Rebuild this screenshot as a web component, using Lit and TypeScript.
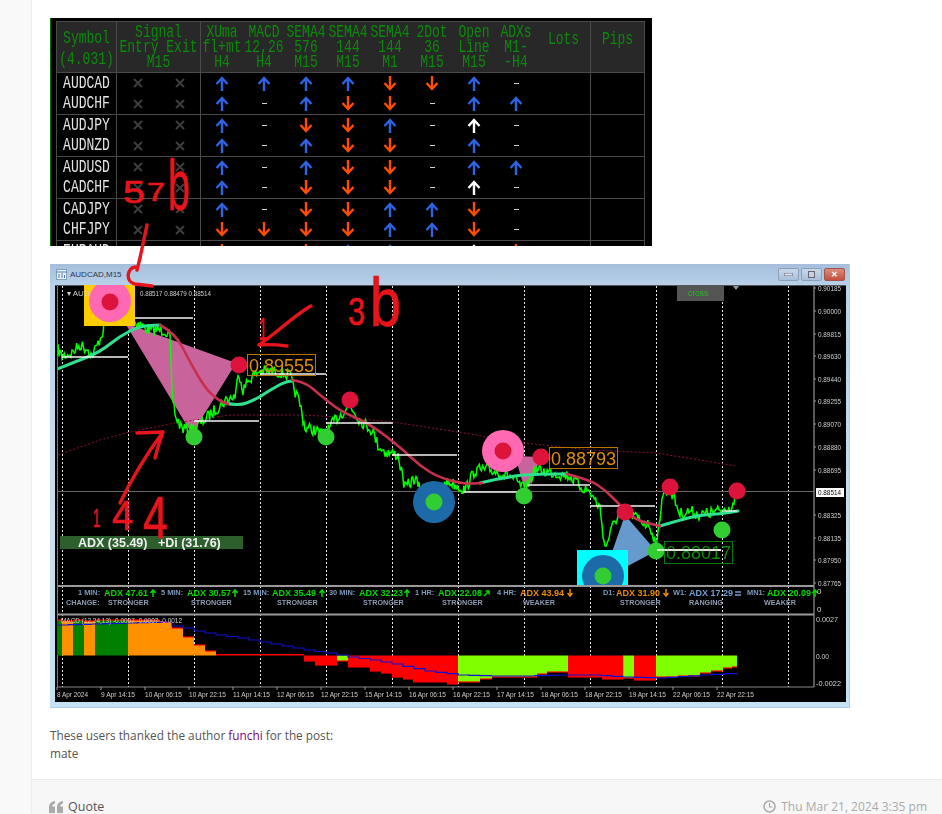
import { LitElement, html, svg, css } from "lit";
import { customElement } from "lit/decorators.js";

// ---- quote table data: u = blue up, d = orange down, w = white up, - = none
const ROWS: [string, string][] = [
  ["AUDCAD", "uuuuddu-"],
  ["AUDCHF", "u-udd-uu"],
  ["AUDJPY", "u-ddu-w-"],
  ["AUDNZD", "u-udd-u-"],
  ["AUDUSD", "u-udd-uu"],
  ["CADCHF", "u-ddd-w-"],
  ["CADJPY", "u-dduud-"],
  ["CHFJPY", "dddduud-"],
  ["EURAUD", "d-duu-wd"],
];

const HEADS = [
  ["XUma", "fl+mt", "H4"],
  ["MACD", "12,26", "H4"],
  ["SEMA4", "576", "M15"],
  ["SEMA4", "144", "M15"],
  ["SEMA4", "144", "M1"],
  ["2Dot", "36", "M15"],
  ["Open", "Line", "M15"],
  ["ADXs", "M1-", "-H4"],
];

@customElement("quote-table")
class QuoteTable extends LitElement {
  static styles = css`
    :host {
      display: block;
      width: 602px;
      height: 228px;
      box-sizing: border-box;
      background: #000;
      border-left: 1px solid #0a6b0a;
      padding: 3px 0 0 5px;
      overflow: hidden;
    }
    .grid {
      width: 589px;
      box-sizing: border-box;
      border-left: 1px solid #4a4a4a;
      border-top: 1px solid #4a4a4a;
    }
    .head,
    .row {
      display: grid;
      grid-template-columns: 60px repeat(10, 42px) 54px 54px;
    }
    .head {
      height: 50px;
      background: #282828;
      border-bottom: 1px solid #4a4a4a;
      color: #0a8a0a;
    }
    .row {
      color: #e4e4e4;
    }
    .group {
      border-bottom: 1px solid #4a4a4a;
    }
    .group .row {
      height: 20.5px;
    }
    .cell {
      display: flex;
      flex-direction: column;
      align-items: center;
      justify-content: center;
      box-sizing: border-box;
      font: 13px/15px "Liberation Mono", monospace;
    }
    .end {
      border-right: 1px solid #4a4a4a;
    }
    .span2 {
      grid-column: span 2;
    }
    .spread {
      gap: 6px;
      padding-top: 3px;
    }
    .lift {
      padding-bottom: 16px;
    }
    .t {
      display: block;
      white-space: pre;
      transform: scaleY(1.38);
    }
    .mark {
      display: block;
    }
    .dash {
      width: 5px;
      height: 1px;
      background: #d0d0d0;
    }
  `;

  mark(c: string) {
    if (c === "-") return html`<div class="dash"></div>`;
    const up = c !== "d";
    const col = c === "u" ? "#2f63e4" : c === "w" ? "#fff" : "#ff4d00";
    return html`<svg class="mark" width="14" height="15" viewBox="0 0 14 15">
      <path
        d=${up ? "M7 15V2M1.5 8L7 2l5.5 6" : "M7 0v13M1.5 7L7 13l5.5-6"}
        fill="none"
        stroke=${col}
        stroke-width="2.4"
      />
    </svg>`;
  }

  cross() {
    return html`<svg class="mark" width="10" height="10" viewBox="0 0 10 10">
      <path d="M1 1l8 8M9 1l-8 8" stroke="#3d3d3d" stroke-width="2" />
    </svg>`;
  }

  row(r: [string, string]) {
    return html`<div class="row">
      <div class="cell end"><span class="t">${r[0]}</span></div>
      <div class="cell">${this.cross()}</div>
      <div class="cell end">${this.cross()}</div>
      ${[...r[1]].map((c) => html`<div class="cell">${this.mark(c)}</div>`)}
      <div class="cell end"></div>
      <div class="cell end"></div>
    </div>`;
  }

  render() {
    const groups = [];
    for (let i = 0; i < ROWS.length; i += 2) groups.push(ROWS.slice(i, i + 2));
    return html`<div class="grid">
      <div class="head">
        <div class="cell end spread">
          <span class="t">Symbol</span><span class="t">(4.031)</span>
        </div>
        <div class="cell end span2">
          <span class="t">Signal</span><span class="t">Entry Exit</span><span class="t">M15</span>
        </div>
        ${HEADS.map(
          (h) => html`<div class="cell">${h.map((l) => html`<span class="t">${l}</span>`)}</div>`
        )}
        <div class="cell end lift"><span class="t">Lots</span></div>
        <div class="cell end lift"><span class="t">Pips</span></div>
      </div>
      ${groups.map((g) => html`<div class="group">${g.map((r) => this.row(r))}</div>`)}
    </div>`;
  }
}

// ---- chart data, all in page coordinates
type P = [number, number];

const PRICE: P[] = [
  [58, 350], [62, 356], [72, 353], [80, 345], [88, 349], [92, 356], [97, 346], [105, 326], [112, 310],
  [128, 315], [135, 322], [150, 330], [165, 330], [170, 338], [172, 395], [176, 418], [182, 428],
  [190, 430], [200, 424], [215, 410], [226, 400], [235, 396], [239, 372], [243, 390], [250, 378],
  [260, 371], [280, 372], [290, 376], [293, 386], [300, 404], [305, 428], [315, 430], [325, 436],
  [335, 420], [345, 410], [350, 405], [360, 420], [372, 430], [378, 445], [385, 452], [398, 455],
  [405, 488], [415, 478], [420, 490], [435, 490], [450, 482], [465, 490], [475, 470], [490, 470],
  [510, 476], [525, 490], [535, 470], [555, 473], [570, 476], [580, 486], [590, 492], [600, 508],
  [605, 548], [615, 520], [625, 510], [640, 520], [650, 526], [657, 546], [662, 496], [670, 488],
  [680, 514], [690, 511], [700, 515], [720, 511], [732, 506], [737, 497],
];

function noisy(pts: P[]) {
  let seed = 7;
  const rnd = () => {
    seed = (seed * 16807) % 2147483647;
    return seed / 2147483647 - 0.5;
  };
  const out: string[] = [];
  for (let i = 0; i < pts.length - 1; i++) {
    const [x0, y0] = pts[i];
    const [x1, y1] = pts[i + 1];
    const n = Math.max(1, Math.round((x1 - x0) / 1.1));
    for (let k = 0; k < n; k++) {
      const f = k / n;
      out.push(`${(x0 + (x1 - x0) * f).toFixed(1)},${(y0 + (y1 - y0) * f + rnd() * 12).toFixed(1)}`);
    }
  }
  return out.join(" ");
}
const PRICE_PATH = noisy(PRICE);

const line = (p: P[]) => p.map((q) => q.join(",")).join(" ");

// curve through the midpoints, so the moving average has no corners
function smooth(p: P[]) {
  let d = `M${p[0][0]} ${p[0][1]}`;
  for (let i = 1; i < p.length - 1; i++) {
    const mx = (p[i][0] + p[i + 1][0]) / 2;
    const my = (p[i][1] + p[i + 1][1]) / 2;
    d += `Q${p[i][0]} ${p[i][1]} ${mx} ${my}`;
  }
  const e = p[p.length - 1];
  return d + `L${e[0]} ${e[1]}`;
}

const MA_TEAL: P[][] = [
  [[55, 370], [75, 362], [100, 352], [120, 336], [140, 326], [160, 325]],
  [[225, 403], [238, 406], [255, 400], [270, 390], [285, 382], [292, 381]],
  [[480, 483], [510, 476], [540, 474], [567, 474]],
  [[660, 526], [680, 520], [700, 515], [720, 514], [738, 511]],
];
const MA_RED: P[][] = [
  [[160, 325], [175, 333], [190, 362], [205, 388], [218, 400], [228, 404]],
  [[292, 380], [305, 382], [320, 395], [340, 411], [370, 424], [400, 447], [420, 466], [440, 478], [465, 484], [482, 483]],
  [[567, 474], [590, 480], [605, 490], [620, 505], [635, 520], [660, 526]],
];
const DOTTED: P[] = [
  [58, 455], [100, 440], [130, 432], [175, 423], [230, 415], [300, 415], [340, 417], [392, 422],
  [458, 432], [524, 443], [590, 450], [656, 453], [700, 460], [735, 466],
];
const LEVELS: [number, number, number][] = [
  [128, 193, 318], [62, 128, 357], [260, 326, 374], [194, 259, 421], [326, 392, 423],
  [392, 457, 455], [463, 523, 492], [527, 590, 485], [590, 655, 506], [657, 721, 550], [722, 737, 511],
];
const GRID_X = Array.from({ length: 12 }, (_, i) => 62 + i * 66);
const PRICES: [string, number][] = [
  ["0.90185", 288], ["0.90000", 311], ["0.89815", 334], ["0.89630", 356], ["0.89440", 379],
  ["0.89255", 401], ["0.89070", 424], ["0.88880", 447], ["0.88695", 470], ["0.88325", 515],
  ["0.88135", 538], ["0.87950", 560], ["0.87765", 583],
];
const DATES = [
  "8 Apr 2024", "9 Apr 14:15", "10 Apr 06:15", "10 Apr 22:15", "11 Apr 14:15", "12 Apr 06:15",
  "12 Apr 22:15", "15 Apr 14:15", "16 Apr 06:15", "16 Apr 22:15", "17 Apr 14:15", "18 Apr 06:15",
  "18 Apr 22:15", "19 Apr 14:15", "22 Apr 06:15", "22 Apr 22:15",
];

const G = "#008000";
const O = "#ff9000";
const R = "#ff0000";
const L = "#80ff00";
const ZERO = 655.5;
// histogram: x0, x1, far y, colour
const BARS: [number, number, number, string][] = [
  [57, 62, 620, G], [62, 73, 621, O], [73, 84, 620, G], [84, 95, 621, O], [95, 128, 620, G],
  [128, 160, 620, O], [160, 172, 622, O], [172, 183, 628, O], [183, 194, 637, O], [194, 205, 645, O],
  [205, 216, 651, O], [216, 304, 654.5, R], [304, 315, 661, R], [315, 337, 665, R], [337, 348, 661, L],
  [348, 370, 667, R], [370, 381, 671, R], [381, 392, 673, R], [392, 403, 677, R], [403, 413, 679, R],
  [413, 447, 682, R], [447, 458, 684, R], [458, 480, 682, L], [480, 492, 679, L], [492, 513, 677, L],
  [513, 537, 677, L], [537, 547, 674, L], [547, 568, 672, L], [568, 602, 677, R], [602, 623, 679, R],
  [623, 634, 678, L], [634, 656, 680, R], [656, 678, 677, L], [678, 700, 676, L], [700, 711, 673, L],
  [711, 723, 671, L], [723, 732, 668, L], [732, 737, 667, L],
];
const SIGNAL: P[] = [
  [57, 625], [160, 622], [172, 626], [183, 628], [194, 631], [205, 633], [216, 635], [238, 638],
  [260, 642], [282, 646], [304, 650], [326, 653], [337, 655], [348, 657], [370, 660], [392, 664],
  [425, 671], [458, 675], [491, 676], [524, 676], [557, 675], [590, 675], [623, 677], [656, 678],
  [700, 675], [737, 673],
];

// the signal line moves once per bar (11px), so it is drawn as steps
function steps(p: P[]) {
  let d = `M${p[0][0]} ${p[0][1]}`;
  for (let i = 1; i < p.length; i++) {
    const [x0, y0] = p[i - 1];
    const [x1, y1] = p[i];
    const n = Math.max(1, Math.round((x1 - x0) / 11));
    for (let k = 1; k <= n; k++) {
      const f = k / n;
      d += `H${(x0 + (x1 - x0) * f).toFixed(1)}V${(y0 + (y1 - y0) * f).toFixed(1)}`;
    }
  }
  return d;
}

const TF: [string, number, string, number, string, number, string][] = [
  ["1 MIN:", 78, "ADX 47.61", 104, "#00d800", 150, "u"],
  ["5 MIN:", 161, "ADX 30.57", 187, "#00d800", 232, "u"],
  ["15 MIN:", 243, "ADX 35.49", 272, "#00d800", 319, "u"],
  ["30 MIN:", 329, "ADX 32.23", 359, "#00d800", 404, "u"],
  ["1 HR:", 415, "ADX 22.08", 438, "#00d800", 484, "n"],
  ["4 HR:", 497, "ADX 43.94", 520, "#e88a00", 567, "d"],
  ["D1:", 603, "ADX 31.90", 616, "#e88a00", 663, "d"],
  ["W1:", 673, "ADX 17.29", 689, "#6f9fd0", 735, "e"],
  ["MN1:", 747, "ADX 20.09", 767, "#00d800", 812, "u"],
];
const CHANGE: [string, number][] = [
  ["CHANGE:", 66], ["STRONGER", 108], ["STRONGER", 191], ["STRONGER", 277], ["STRONGER", 363],
  ["STRONGER", 442], ["WEAKER", 523], ["STRONGER", 620], ["RANGING", 689], ["WEAKER", 764],
];

const dot = (x: number, y: number, c: string) => svg`<circle cx=${x} cy=${y} r="8.5" fill=${c} />`;
const RED = "#dc143c";
const GREEN = "#32cd32";

function tfArrow(x: number, kind: string, c: string) {
  const d =
    kind === "u" ? "M3 8V2M.5 4L3 1l2.5 3" :
    kind === "d" ? "M3 0v6M.5 4L3 7l2.5-3" :
    kind === "n" ? "M0 7l5-5M1.5 2H5v3.5" : "M0 3h6M0 6h6";
  return svg`<path d=${d} transform="translate(${x} 589)" fill="none" stroke=${c} stroke-width="1.5" />`;
}

@customElement("chart-window")
class ChartWindow extends LitElement {
  static styles = css`
    :host {
      display: block;
      width: 800px;
      height: 444px;
      box-sizing: border-box;
      padding: 0 4px 6px 5px;
      background: linear-gradient(#a6bedb, #b9d2ea 5%, #c9dff0 60%, #c4e2f4);
      border: 1px solid #b4cbe2;
      border-width: 0 1px 1px 0;
      overflow: hidden;
    }
    .bar {
      height: 21px;
      display: flex;
      align-items: center;
      gap: 3px;
      padding-left: 1px;
      font: 8px "Liberation Sans", sans-serif;
      color: #2a3850;
    }
    .bar span {
      flex: 1;
    }
    .btns {
      display: flex;
      gap: 2px;
    }
    .btn {
      width: 21px;
      height: 13px;
      box-sizing: border-box;
      border: 1px solid #8ba1ba;
      border-radius: 2px;
      background: linear-gradient(#c8d8ea, #a9bfd8);
      display: flex;
      align-items: center;
      justify-content: center;
      color: #444;
      font-size: 8px;
      font-weight: bold;
    }
    .close {
      background: linear-gradient(#d98c7e, #c5503f);
      border-color: #a05548;
      color: #fff;
    }
    svg.plot {
      display: block;
      background: #000;
      font-family: "Liberation Sans", sans-serif;
      filter: blur(0.3px);
    }
    .sm {
      font-size: 8px;
      fill: #cfcfcf;
    }
    .tf {
      font-size: 7.4px;
      font-weight: bold;
      fill: #7d99bb;
    }
    .adx {
      font-size: 9px;
      font-weight: bold;
    }
    .chg {
      font-size: 7.2px;
      font-weight: bold;
      fill: #8f9bb0;
    }
    .big {
      font-size: 18px;
    }
  `;

  render() {
    return html`
      <div class="bar">
        <svg width="11" height="11" viewBox="0 0 11 11">
          <rect x=".5" y=".5" width="10" height="10" fill="#eef3fa" stroke="#7f9fc4" />
          <path d="M.5 3h10M3 5v4M6 4v5M8.5 6v3" stroke="#4d78b0" />
        </svg>
        <span>AUDCAD,M15</span>
        <div class="btns">
          <div class="btn"><svg width="9" height="3"><rect width="9" height="3" fill="#dfe6f0" stroke="#667" /></svg></div>
          <div class="btn"><svg width="7" height="7"><rect x=".5" y=".5" width="6" height="6" fill="#c8d0dc" stroke="#667" /></svg></div>
          <div class="btn close">✕</div>
        </div>
      </div>
      <svg class="plot" width="791" height="417" viewBox="55 285 791 417">
        <defs>
          <clipPath id="main"><rect x="57" y="285" width="757" height="300" /></clipPath>
        </defs>
        <rect x="55" y="284" width="791" height="2" fill="#555" />

        <!-- grid -->
        ${GRID_X.map(
          (x) => svg`<line x1=${x + 0.5} x2=${x + 0.5} y1="286" y2="687" stroke="#e8e8e8" stroke-dasharray="2 2" />`
        )}
        <line x1="57" x2="814" y1="491.5" y2="491.5" stroke="#666" />

        <g clip-path="url(#main)">
          <polygon points="125,323 236,363 192,434" fill="#c9639b" />
          <polygon points="515,456 541,457 529,487 524,487" fill="#c9639b" />
          <polygon points="625,515 656,551 626,567 612,552" fill="#6699cc" />

          <polyline points=${line(DOTTED)} fill="none" stroke="#8c1230" stroke-dasharray="2 2" />
          <polyline points=${PRICE_PATH} fill="none" stroke="#00ff00" stroke-width="1.5" />

          ${MA_TEAL.map(
            (p) => svg`<path d=${smooth(p)} fill="none" stroke="#2fe090" stroke-width="3" stroke-linecap="round" />`
          )}
          ${MA_RED.map(
            (p) => svg`<path d=${smooth(p)} fill="none" stroke="#c9304f" stroke-width="2.6" stroke-linecap="round" />`
          )}
          ${LEVELS.map(
            ([a, b, y]) => svg`<line x1=${a} x2=${b} y1=${y} y2=${y} stroke="#f4f4f4" stroke-width="1.3" />`
          )}

          <rect x="84" y="285" width="51" height="41" fill="#ffcc00" />
          <circle cx="110" cy="301" r="21" fill="#ff69b4" />
          ${dot(110, 302, RED)} ${dot(239, 365, RED)} ${dot(350, 400, RED)} ${dot(541, 457, RED)}
          ${dot(625, 512, RED)} ${dot(670, 487, RED)} ${dot(737, 491, RED)}
          <circle cx="503" cy="451" r="21" fill="#ff69b4" />
          ${dot(503, 451, RED)}
          ${dot(194, 437, GREEN)} ${dot(326, 437, GREEN)} ${dot(524, 496, GREEN)} ${dot(722, 530, GREEN)}
          ${dot(656, 551, GREEN)}
          <circle cx="434" cy="502" r="21" fill="#1d6aa8" />
          ${dot(434, 502, GREEN)}
          <rect x="577" y="550" width="51" height="36" fill="#00ffff" />
          <circle cx="603" cy="576" r="21" fill="#1d6aa8" />
          ${dot(603, 576, GREEN)}

          <rect x="247.5" y="354.5" width="68" height="21" fill="none" stroke="#b87400" />
          <text class="big" x="249" y="372" fill="#e08f00">0.89555</text>
          <rect x="549.5" y="447.5" width="68" height="21" fill="none" stroke="#b87400" />
          <text class="big" x="551" y="465" fill="#e08f00">0.88793</text>
          <rect x="664.5" y="541.5" width="68" height="22" fill="none" stroke="#0a7a0a" />
          <text class="big" x="666" y="559" fill="#0c8c0c">0.88017</text>
          <line x1="657" x2="721" y1="550" y2="550" stroke="#f4f4f4" stroke-width="1.3" />

          <rect x="677" y="285" width="47" height="16" fill="#555" />
          <text x="688" y="296" font-size="8.5" fill="#22b822">cross</text>
          <polygon points="733,286 739,286 736,290" fill="#8a9bb0" />

          <rect x="60" y="536" width="183" height="13" fill="#2d5f2d" />
          <text x="78" y="547" font-size="12.5" font-weight="bold" fill="#f0f0f0" xml:space="preserve">ADX (35.49)   +Di (31.76)</text>
          <text class="sm" x="67" y="296">▾ AUD</text>
          <text class="sm" x="140" y="296" textLength="71" lengthAdjust="spacingAndGlyphs">0.88517 0.88479 0.88514</text>
        </g>

        <!-- panes -->
        <rect x="57" y="585" width="757" height="2" fill="#999" />
        <rect x="57" y="613.5" width="757" height="2" fill="#999" />
        <line x1="57.5" x2="57.5" y1="286" y2="687" stroke="#777" />
        <line x1="814" x2="814" y1="286" y2="687" stroke="#888" stroke-width="1.3" />
        <line x1="57" x2="814" y1="687" y2="687" stroke="#888" />

        <!-- ADX strip -->
        ${TF.map(
          ([lab, lx, val, vx, c, ax, k]) => svg`
            <text class="tf" x=${lx} y="595">${lab}</text>
            <text class="adx" x=${vx} y="596" fill=${c}>${val}</text>
            ${tfArrow(ax, k, c)}`
        )}
        ${CHANGE.map(([s, x]) => svg`<text class="chg" x=${x} y="605">${s}</text>`)}

        <!-- MACD -->
        ${BARS.map(([a, b, y, c]) => {
          const top = Math.min(y, ZERO);
          return svg`<rect x=${a} y=${top} width=${b - a} height=${Math.abs(y - ZERO)} fill=${c} />
            <line x1=${a} x2=${b} y1=${y} y2=${y} stroke="#ff0000" stroke-width="1.2" />`;
        })}
        <path d=${steps(SIGNAL)} fill="none" stroke="#1010d0" stroke-width="1.2" />
        <text class="sm" x="61" y="623" textLength="121" lengthAdjust="spacingAndGlyphs">MACD (12,24,13) -0.0007 -0.0007 -0.0012</text>

        <!-- axis -->
        ${PRICES.map(
          ([s, y]) => svg`<text class="sm" x="818" y=${y + 3} textLength="23" lengthAdjust="spacingAndGlyphs">${s}</text>
            <line x1="814" x2="816" y1=${y} y2=${y} stroke="#999" />`
        )}
        <rect x="816" y="488" width="28" height="9" fill="#fff" />
        <text x="818" y="495" font-size="8" fill="#000" textLength="23" lengthAdjust="spacingAndGlyphs">0.88514</text>
        <text class="sm" x="817" y="594">0</text>
        <text class="sm" x="817" y="612">0</text>
        <text class="sm" x="816" y="622" textLength="22" lengthAdjust="spacingAndGlyphs">0.0027</text>
        <text class="sm" x="816" y="659" textLength="13" lengthAdjust="spacingAndGlyphs">0.00</text>
        <text class="sm" x="816" y="686" textLength="25" lengthAdjust="spacingAndGlyphs">-0.0022</text>

        ${DATES.map(
          (s, i) => svg`<text class="sm" x=${57 + i * 44} y="697" textLength=${i === 0 ? 31 : i === 1 ? 34 : 37} lengthAdjust="spacingAndGlyphs">${s}</text>
            <line x1=${57 + i * 44} x2=${57 + i * 44} y1="687" y2="690" stroke="#999" />`
        )}
      </svg>
    `;
  }
}

// ---- hand-written marks, real characters fitted to the boxes they occupy
const HAND: [string, number, number, number, number][] = [
  ["5", 123, 203, 22, 22],
  ["7", 147, 201, 18, 19],
  ["b", 168, 210, 22, 52],
  ["1", 259, 340, 8, 22],
  ["3", 348, 325, 17, 28],
  ["b", 370, 326, 31, 50],
  ["1", 93, 527, 7, 19],
  ["4", 112, 530, 21, 30],
  ["4", 143, 538, 25, 42],
];

@customElement("app-root")
export class AppRoot extends LitElement {
  static styles = css`
    :host {
      display: block;
      position: relative;
      width: 942px;
      height: 814px;
      overflow: hidden;
      background: #f9f9f9;
      font-family: "Open Sans", sans-serif;
    }
    .post {
      margin-left: 31px;
      height: 100%;
      display: flex;
      flex-direction: column;
      background: #fff;
      border-left: 1px solid #eee;
    }
    .body {
      flex: 1;
      padding: 18px 0 0 18px;
    }
    chart-window {
      margin-top: 18px;
    }
    .thanks {
      margin-top: 18px;
      font-size: 11.8px;
      line-height: 18px;
      color: #555;
    }
    .thanks a {
      color: #800080;
      text-decoration: none;
    }
    .foot {
      height: 35px;
      flex: none;
      box-sizing: border-box;
      background: #f7f7f7;
      border-top: 1px solid #eaeaea;
      padding: 19px 15px 0 17px;
      display: flex;
      justify-content: space-between;
      align-items: center;
      font-size: 12.5px;
      color: #555;
    }
    .quote,
    .when {
      display: flex;
      align-items: center;
      gap: 5px;
    }
    .when {
      color: #aaa;
      font-size: 12px;
    }
    .marks {
      position: absolute;
      inset: 0;
      pointer-events: none;
    }
    .marks text {
      font-family: "Liberation Sans", sans-serif;
      fill: #e8141c;
      stroke: #e8141c;
      stroke-width: 0.7;
    }
    .marks path {
      fill: none;
      stroke: #e8141c;
      stroke-width: 3.4;
      stroke-linecap: round;
      stroke-linejoin: round;
    }
  `;

  render() {
    return html`
      <div class="post">
        <div class="body">
          <quote-table></quote-table>
          <chart-window></chart-window>
          <div class="thanks">
            These users thanked the author <a href="#">funchi</a> for the post:<br />mate
          </div>
        </div>
        <div class="foot">
          <div class="quote">
            <svg width="14" height="12" viewBox="0 0 14 12" fill="#aaa">
              <path d="M0 12V6C0 2.5 2 .5 6 0v2.5C4 3 3.2 4 3.2 5.5H6V12zM8 12V6c0-3.500 2-5.500 6-6v2.500c-2 .5-2.800 1.500-2.800 3H14V12z" />
            </svg>
            Quote
          </div>
          <div class="when">
            <svg width="13" height="13" viewBox="0 0 13 13" fill="none" stroke="#aaa" stroke-width="1.5">
              <circle cx="6.5" cy="6.5" r="5.5" />
              <path d="M6.5 3v4H9.5" stroke-width="1.2" />
            </svg>
            Thu Mar 21, 2024 3:35 pm
          </div>
        </div>
      </div>
      <svg class="marks" width="942" height="814" viewBox="0 0 942 814">
        ${HAND.map(
          ([c, x, y, w, h]) => svg`<text x=${x} y=${y} font-size=${h / 0.72} textLength=${w} lengthAdjust="spacingAndGlyphs">${c}</text>`
        )}
        <path d="M147 225L140 258L137 270M135 267C127 268 125 282 135 284L152 286" />
        <path d="M311 306C296 314 280 330 259 345C270 344 280 345 287 346" />
        <path d="M163 432L137 433M163 432C160 440 157 450 155 458M163 432C148 452 132 478 120 503" />
      </svg>
    `;
  }
}
